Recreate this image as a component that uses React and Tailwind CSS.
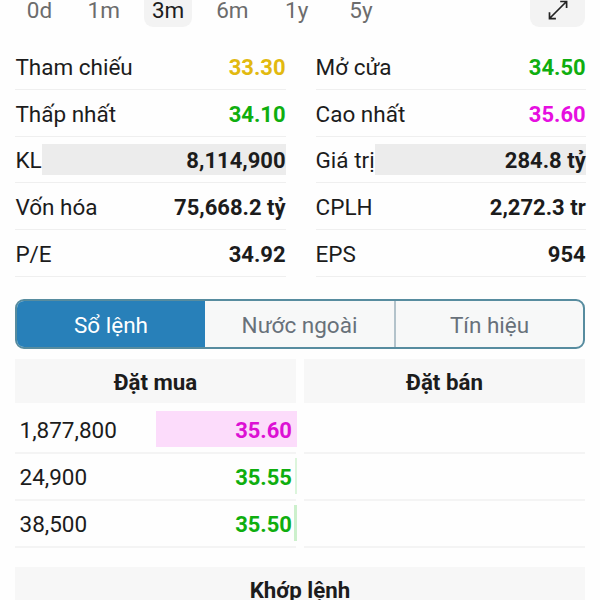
import { clsx } from 'clsx'

const ranges = ['0d', '1m', '3m', '6m', '1y', '5y']

const stats = [
  [
    { label: 'Tham chiếu', value: '33.30', color: 'text-[#e2b90f]' },
    { label: 'Thấp nhất', value: '34.10', color: 'text-[#0fae0f]' },
    { label: 'KL', value: '8,114,900', filled: true },
    { label: 'Vốn hóa', value: '75,668.2 tỷ' },
    { label: 'P/E', value: '34.92' },
  ],
  [
    { label: 'Mở cửa', value: '34.50', color: 'text-[#0fae0f]' },
    { label: 'Cao nhất', value: '35.60', color: 'text-[#e60fe0]' },
    { label: 'Giá trị', value: '284.8 tỷ', filled: true },
    { label: 'CPLH', value: '2,272.3 tr' },
    { label: 'EPS', value: '954' },
  ],
]

const tabs = ['Sổ lệnh', 'Nước ngoài', 'Tín hiệu']

const bids = [
  { volume: '1,877,800', price: '35.60', color: 'text-[#dc10d4]', bar: 'bg-[#fcdcfb]', width: 141 },
  { volume: '24,900', price: '35.55', color: 'text-[#0fae0f]', bar: 'bg-[#dcf5dc]', width: 2 },
  { volume: '38,500', price: '35.50', color: 'text-[#0fae0f]', bar: 'bg-[#ccf0cc]', width: 3 },
]

function RangeBar() {
  return (
    <div className="flex h-[27px] items-end justify-between">
      <div className="flex">
        {ranges.map((r) => (
          <button
            key={r}
            className={clsx(
              'mr-[16.3px] h-[47px] w-[48px] shrink-0 rounded-[9px] pl-px pt-[13px] text-center leading-[34px]',
              r === '3m' ? 'bg-[#f3f3f3] text-[#1c1c1c]' : 'text-[#6c6c6c]'
            )}
          >
            {r}
          </button>
        ))}
      </div>
      <button className="flex h-[47px] w-[55px] items-end justify-center rounded-[9px] bg-[#f3f3f3] pb-[6px]">
        <svg width="22" height="22" viewBox="0 0 22 22" fill="none" stroke="#222" strokeWidth="1.7">
          <path d="M2.5 19.5 19.5 2.5M13.2 2.5h6.4v6.4M2.5 13.2v6.4h6.4" />
        </svg>
      </button>
    </div>
  )
}

function StatRow({ label, value, color, filled }) {
  return (
    <div className="flex h-[46.8px] border-b border-[#efefef] pt-[7px]">
      <span className={filled ? 'leading-[32px]' : 'leading-[34px]'}>{label}</span>
      <span
        className={clsx(
          'h-[31px] flex-1 text-right text-[22px] font-bold',
          filled ? 'bg-[#ececec] leading-[34px]' : 'leading-[36px]',
          color
        )}
      >
        {value}
      </span>
    </div>
  )
}

function BidRow({ volume, price, color, bar, width }) {
  return (
    <div className="relative flex h-[47px] justify-between border-b-2 border-[#f4f4f4] pl-[4.5px] pr-[4px]">
      <div className={clsx('absolute right-[-1px] top-[4px] h-[36px]', bar)} style={{ width }} />
      <span className="leading-[47px]">{volume}</span>
      <span className={clsx('relative text-[22px] font-bold leading-[47px]', color)}>{price}</span>
    </div>
  )
}

function Heading({ children }) {
  return <div className="h-[44px] bg-[#f7f7f7] text-center text-[22.3px] font-bold leading-[46px]">{children}</div>
}

export default function App() {
  return (
    <div className="h-[600px] w-[600px] overflow-hidden bg-[#fefefe] px-[15px] font-['Roboto','Noto_Sans',sans-serif] text-[22.5px] text-[#1c1c1c]">
      <RangeBar />

      <div className="-mr-[0.7px] ml-[0.4px] mt-[16.1px] flex gap-[30px]">
        {stats.map((column, i) => (
          <div key={i} className="flex-1">
            {column.map((row) => (
              <StatRow key={row.label} {...row} />
            ))}
          </div>
        ))}
      </div>

      <div className="mt-[21.9px] grid h-[50px] grid-cols-[188px_189px_1fr] overflow-hidden rounded-[9px] border-2 border-[#578c9f] bg-[#f7f8f8]">
        {tabs.map((tab, i) => (
          <button
            key={tab}
            className={clsx(
              'leading-[48px]',
              i === 0 ? 'bg-[#2880b9] text-white' : 'text-[#68717a]',
              i === 2 && 'border-l-2 border-[#b3c3cb]'
            )}
          >
            {tab}
          </button>
        ))}
      </div>

      <div className="mt-[10px] grid grid-cols-2 gap-2">
        <Heading>Đặt mua</Heading>
        <Heading>Đặt bán</Heading>
      </div>
      <div className="mt-[4px] grid grid-cols-2 gap-2">
        <div>
          {bids.map((bid) => (
            <BidRow key={bid.price} {...bid} />
          ))}
        </div>
        <div>
          {bids.map((bid) => (
            <div key={bid.price} className="h-[47px] border-b-2 border-[#f4f4f4]" />
          ))}
        </div>
      </div>

      <div className="mt-[19px]">
        <Heading>Khớp lệnh</Heading>
      </div>
    </div>
  )
}
